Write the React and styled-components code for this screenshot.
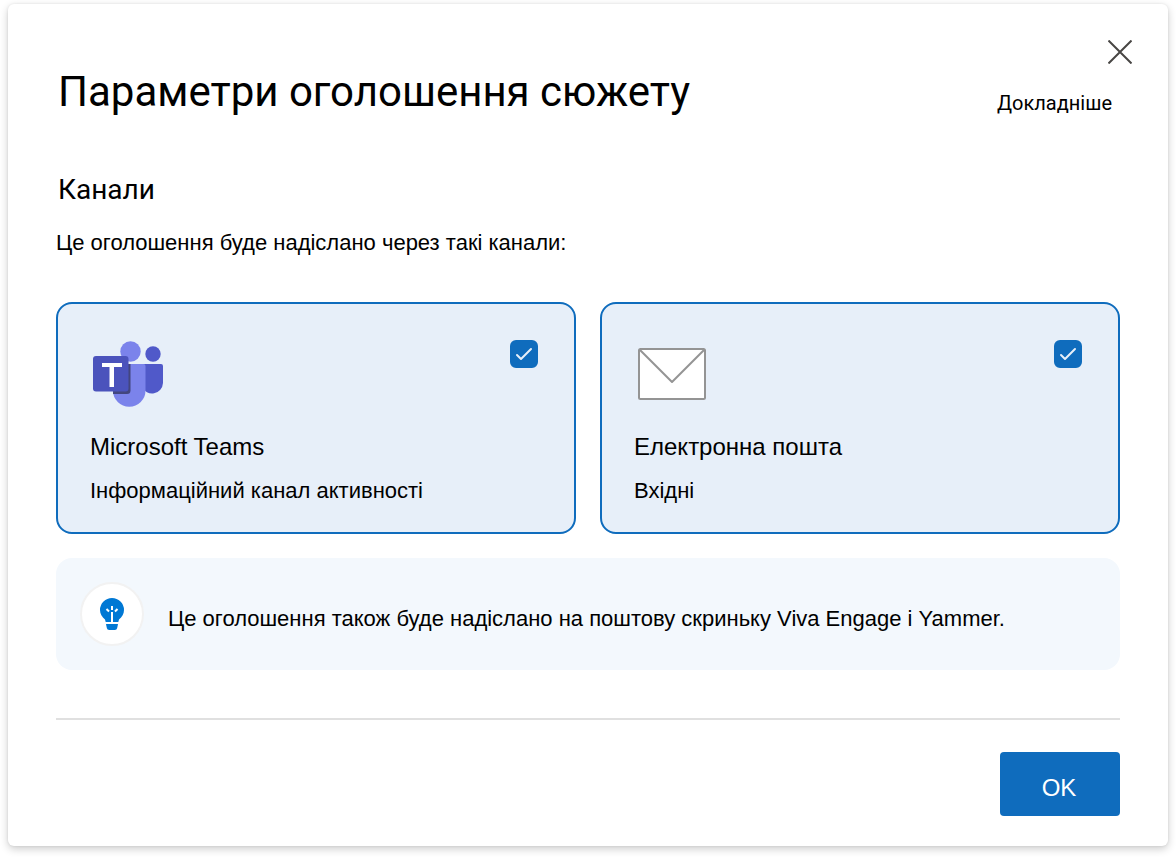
import React from "react";
import styled, { createGlobalStyle } from "styled-components";

const GlobalStyle = createGlobalStyle`
  * {
    box-sizing: border-box;
  }

  body {
    margin: 0;
    background: #fff;
    color: #000;
    font-family: "Liberation Sans", Arial, sans-serif;
  }

  h1, h2, p {
    margin: 0;
    font-weight: 400;
  }
`;

const Dialog = styled.main`
  margin: 4px 8px 12px;
  padding: 36px 48px 30px;
  background: #fff;
  border-radius: 6px;
  box-shadow: 0 3px 8px rgba(0, 0, 0, 0.2), 0 0 3px rgba(0, 0, 0, 0.08);
`;

const Header = styled.header`
  display: flex;
  justify-content: space-between;
  align-items: flex-start;
  margin-right: -12px;
`;

const Title = styled.h1`
  padding: 24px 0 0 2px;
  font-family: Roboto, sans-serif;
  font-size: 42px;
  line-height: 56px;
`;

const HeaderActions = styled.div`
  display: flex;
  flex-direction: column;
  align-items: flex-end;
  gap: 27px;
`;

const CloseButton = styled.button`
  display: flex;
  padding: 0;
  border: none;
  background: none;
  cursor: pointer;
`;

const MoreLink = styled.a`
  margin-right: 20px;
  color: #000;
  font-family: Roboto, sans-serif;
  font-size: 20px;
  line-height: 24px;
  text-decoration: none;
`;

const SectionTitle = styled.h2`
  margin-top: 52px;
  padding-left: 2px;
  font-family: Roboto, sans-serif;
  font-size: 28px;
  line-height: 36px;
`;

const Text = styled.p`
  font-size: 22px;
  line-height: 28px;
`;

const Intro = styled(Text)`
  margin-top: 21px;
`;

const Channels = styled.div`
  display: grid;
  grid-template-columns: 1fr 1fr;
  gap: 24px;
  margin-top: 45px;
`;

const Card = styled.label`
  padding: 36px 36px 27px 32px;
  background: #e7eff9;
  border: 2px solid #0f6cbd;
  border-radius: 16px;
  cursor: pointer;
`;

const CardTop = styled.div`
  display: flex;
  justify-content: space-between;
  align-items: flex-start;
  padding: 0 0 25px 2px;
`;

const Name = styled(Text)`
  font-size: 24px;
`;

const Detail = styled(Text)`
  margin-top: 16px;
`;

const Checkbox = styled.input`
  appearance: none;
  width: 28px;
  height: 28px;
  margin: 0;
  border: 2px solid #0f6cbd;
  border-radius: 6px;
  cursor: pointer;

  &:checked {
    background: #0f6cbd
      url("data:image/svg+xml,%3Csvg xmlns='http://www.w3.org/2000/svg' viewBox='0 0 24 24' fill='none' stroke='%23e7eff9' stroke-width='2' stroke-linecap='round' stroke-linejoin='round'%3E%3Cpath d='M5 13l4 4L19 7'/%3E%3C/svg%3E")
      center / 24px no-repeat;
  }
`;

const Note = styled.aside`
  display: flex;
  align-items: center;
  gap: 24px;
  margin-top: 24px;
  padding: 24px;
  background: #f3f8fd;
  border-radius: 16px;
`;

const NoteIcon = styled.span`
  display: flex;
  flex: none;
  align-items: center;
  justify-content: center;
  width: 64px;
  height: 64px;
  background: #fff;
  border: 2px solid #f2f2f2;
  border-radius: 50%;
`;

const NoteText = styled(Text)`
  padding-top: 10px;
`;

const Footer = styled.footer`
  display: flex;
  justify-content: flex-end;
  margin-top: 48px;
  padding-top: 32px;
  border-top: 2px solid #e0e0e0;
`;

const OkButton = styled.button`
  width: 120px;
  height: 64px;
  padding: 8px 2px 0 0;
  background: #0f6cbd;
  border: none;
  border-radius: 4px;
  color: #fff;
  font-family: inherit;
  font-size: 24px;
  cursor: pointer;
`;

const CloseIcon = () => (
  <svg width="24" height="24" viewBox="0 0 24 24" fill="none" stroke="#484644" strokeWidth="2">
    <path d="M0.5 0.5l23 23M23.5 0.5l-23 23" />
  </svg>
);

const TeamsIcon = () => (
  <svg width="72" height="68" viewBox="0 0 72 68">
    <circle cx="61" cy="14" r="7.7" fill="#5059c9" />
    <path d="M50 24h19a2 2 0 0 1 2 2v17a11 11 0 0 1-21 4z" fill="#5059c9" />
    <circle cx="38.5" cy="11.5" r="10.2" fill="#7b83eb" />
    <path d="M21 24h30.5a2 2 0 0 1 2 2v24.500a16.200 16.200 0 0 1-32.500 0z" fill="#7b83eb" />
    <path d="M21 24h17.500v26.500a3.500 3.500 0 0 1-3.500 3.500H21z" fill="#43467f" />
    <rect x="1" y="16" width="35.5" height="35.5" rx="3" fill="#4b53bc" />
    <path d="M10 23h20v4h-8v20h-4.500V27H10z" fill="#fff" />
  </svg>
);

const MailIcon = () => (
  <svg width="72" height="68" viewBox="0 0 72 68" stroke="#949494" strokeWidth="2" strokeLinejoin="round">
    <rect x="3" y="9" width="66" height="50" rx="1.5" fill="#fff" />
    <path d="M3.5 9.5L36 42 68.5 9.5" fill="none" />
  </svg>
);

const BulbIcon = () => (
  <svg width="24" height="34" viewBox="0 0 24 34">
    <path d="M12 1a12 12 0 0 1 12 12c0 4-2 7-5 9.500l-.7 2.500H5.700L5 22.500C2 20 0 17 0 13A12 12 0 0 1 12 1z" fill="#0078d4" />
    <path d="M6 27h12l-.8 4a2.500 2.500 0 0 1-2.400 2H9.200a2.500 2.500 0 0 1-2.400-2z" fill="#0078d4" />
    <path d="M12 15v11M12 9v4M6.500 12l2.500 2.500M17.500 12l-2.500 2.500" stroke="#fff" strokeWidth="2" fill="none" />
  </svg>
);

const channels = [
  { id: "teams", name: "Microsoft Teams", detail: "Інформаційний канал активності", Icon: TeamsIcon },
  { id: "mail", name: "Електронна пошта", detail: "Вхідні", Icon: MailIcon },
];

const App = () => {
  return (
    <>
      <GlobalStyle />
      <Dialog>
        <Header>
          <Title>Параметри оголошення сюжету</Title>
          <HeaderActions>
            <CloseButton type="button" aria-label="Закрити">
              <CloseIcon />
            </CloseButton>
            <MoreLink href="#">Докладніше</MoreLink>
          </HeaderActions>
        </Header>

        <SectionTitle>Канали</SectionTitle>
        <Intro>Це оголошення буде надіслано через такі канали:</Intro>

        <Channels>
          {channels.map(({ id, name, detail, Icon }) => (
            <Card key={id} htmlFor={id}>
              <CardTop>
                <Icon />
                <Checkbox id={id} type="checkbox" defaultChecked />
              </CardTop>
              <Name>{name}</Name>
              <Detail>{detail}</Detail>
            </Card>
          ))}
        </Channels>

        <Note>
          <NoteIcon>
            <BulbIcon />
          </NoteIcon>
          <NoteText>Це оголошення також буде надіслано на поштову скриньку Viva Engage і Yammer.</NoteText>
        </Note>

        <Footer>
          <OkButton type="button">OK</OkButton>
        </Footer>
      </Dialog>
    </>
  );
};

export default App;
